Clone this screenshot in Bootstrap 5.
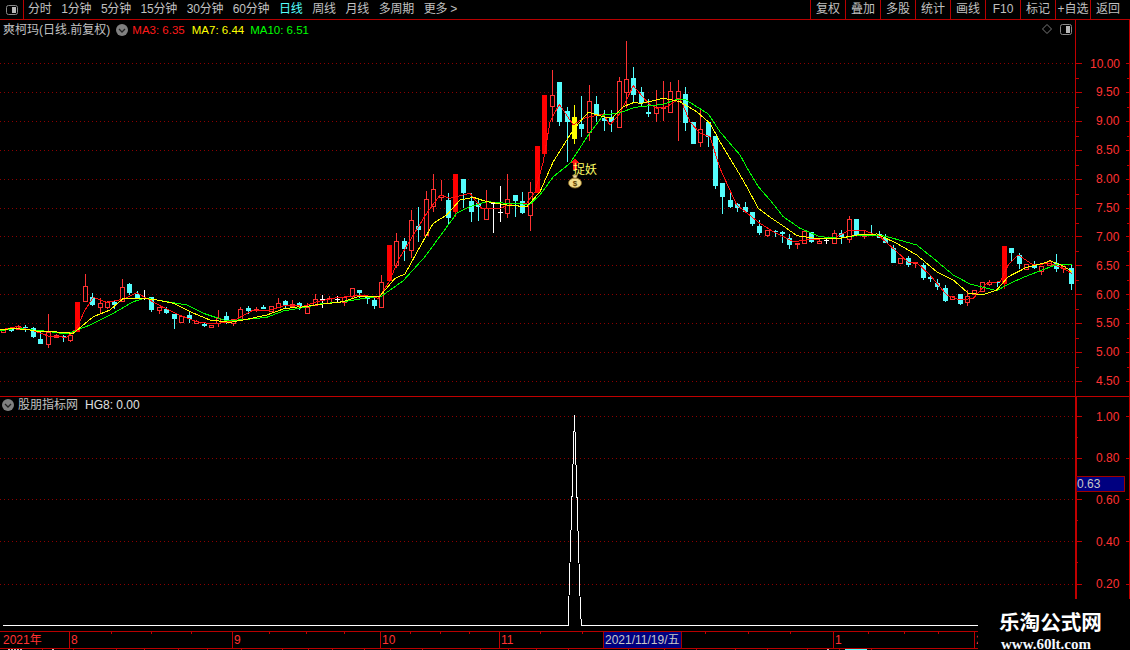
<!DOCTYPE html>
<html lang="zh-CN">
<head>
<meta charset="utf-8">
<title>爽柯玛</title>
<link href="https://cdn.jsdelivr.net/npm/bootstrap@5.3.0/dist/css/bootstrap.min.css" rel="stylesheet">
<style>
html,body{background:#000;margin:0;}
.term{position:relative;width:1130px;height:650px;overflow:hidden;background:#000;color:#c0c0c0;font:12px/1 "Liberation Sans","Noto Sans CJK SC",sans-serif;}
.tbar{height:20px;border-bottom:1px solid #b80000;flex:none;}
.tbar-left{width:24px;height:19px;border-right:1px solid #b80000;}
.tool{padding:0;color:#c0c0c0;font-size:12px;line-height:19px;white-space:nowrap;letter-spacing:-.2px;}
.tool:hover,.tool:focus{color:#c0c0c0;}
.tool.on{color:#55ffff;}
.tgroup{gap:9.6px;padding-left:4px;}
.rtool{width:35px;height:19px;border-left:1px solid #b80000;text-align:center;padding:0;color:#c0c0c0;font-size:12px;line-height:19px;white-space:nowrap;}
.rtool:hover,.rtool:focus{color:#c0c0c0;}
.rgap{width:5px;display:block;}
.pane-a{position:relative;height:377px;flex:none;border-bottom:1px solid #c00000;}
.pane-b{position:relative;height:234px;flex:none;}
.chart{display:block;position:absolute;left:0;top:0;}
.legend{position:absolute;left:3px;top:2px;height:16px;line-height:16px;font-size:12px;white-space:nowrap;}
.legend-b{left:2px;top:0;}
.orb{width:12px;height:12px;flex:none;}
.orb-gap{margin-left:6px;}
.ma{font-size:11.5px;}
.ma-r{color:#ff1a1a;margin-left:4px;}
.ma-y{color:#ffff00;margin-left:7px;}
.ma-g{color:#00ff00;margin-left:6px;}
.ind-name{margin-left:4px;}
.ind-val{margin-left:7px;color:#e0e0e0;}
.tline{position:relative;height:18px;width:978px;flex:none;border-top:1px solid #b80000;border-bottom:1px solid #b80000;}
.sliver{height:1px;flex:none;}
.brand{position:absolute;left:980px;top:600px;width:150px;height:50px;background:#000;color:#fff;}
.brand-cn{margin:11px 0 0 19px;font:700 20.6px/20px "Noto Sans CJK SC",sans-serif;white-space:nowrap;}
.brand-en{margin:7px 0 0 21px;font:700 15px/12px "Liberation Serif",serif;white-space:nowrap;color:#f4f8ff;}
svg text{font-family:"Liberation Sans","Noto Sans CJK SC",sans-serif;}
</style>
</head>
<body>
<div class="term d-flex flex-column">
  <nav class="tbar d-flex justify-content-between">
    <div class="d-flex">
      <div class="tbar-left d-flex align-items-center justify-content-center">
        <svg width="12" height="10" viewBox="0 0 12 10"><rect x=".5" y=".5" width="11" height="9" rx="2" fill="none" stroke="#8a8a8a"/><rect x="6" y="2" width="4" height="6" fill="#b8b8b8"/></svg>
      </div>
      <div class="nav tgroup flex-nowrap">
        <a class="nav-link tool" href="#">分时</a>
        <a class="nav-link tool" href="#">1分钟</a>
        <a class="nav-link tool" href="#">5分钟</a>
        <a class="nav-link tool" href="#">15分钟</a>
        <a class="nav-link tool" href="#">30分钟</a>
        <a class="nav-link tool" href="#">60分钟</a>
        <a class="nav-link tool on" href="#">日线</a>
        <a class="nav-link tool" href="#">周线</a>
        <a class="nav-link tool" href="#">月线</a>
        <a class="nav-link tool" href="#">多周期</a>
        <a class="nav-link tool" href="#">更多 &gt;</a>
      </div>
    </div>
    <div class="nav flex-nowrap">
      <a class="nav-link rtool" href="#">复权</a>
      <a class="nav-link rtool" href="#">叠加</a>
      <a class="nav-link rtool" href="#">多股</a>
      <a class="nav-link rtool" href="#">统计</a>
      <a class="nav-link rtool" href="#">画线</a>
      <a class="nav-link rtool" href="#">F10</a>
      <a class="nav-link rtool" href="#">标记</a>
      <a class="nav-link rtool" href="#">+自选</a>
      <a class="nav-link rtool" href="#">返回</a>
      <span class="rgap"></span>
    </div>
  </nav>

  <section class="pane-a">
    <svg id="mainChart" class="chart" width="1130" height="377" viewBox="0 20 1130 377" shape-rendering="crispEdges">
      <g id="gridA"></g>
      <g id="candles"></g>
      <g id="mas" fill="none" stroke-width="1"></g>
      <g fill="#ff3232" font-size="12">
        <text x="1090" y="68">10.00</text><text x="1096" y="96">9.50</text><text x="1096" y="125">9.00</text>
        <text x="1096" y="154">8.50</text><text x="1096" y="183">8.00</text><text x="1096" y="212">7.50</text>
        <text x="1096" y="241">7.00</text><text x="1096" y="270">6.50</text><text x="1096" y="299">6.00</text>
        <text x="1096" y="327">5.50</text><text x="1096" y="356">5.00</text><text x="1096" y="385">4.50</text>
      </g>
      <g>
        <path d="M575 158 L579 163 L577 163 L577 170 L573 170 L573 163 L571 163 Z" fill="#ff1010"/>
        <text x="573" y="174" font-size="12" fill="#ffff66">捉妖</text>
        <g shape-rendering="auto">
          <ellipse cx="575" cy="183" rx="6.5" ry="5" fill="#f2dc8c" stroke="#8a6a20" stroke-width=".8"/>
          <path d="M572.500 175 h5 l-1 3 h-3z" fill="#e8d8a0" stroke="#8a6a20" stroke-width=".6"/>
          <text x="575" y="186" font-size="8" text-anchor="middle" font-weight="700" fill="#604000">$</text>
        </g>
      </g>
      <g shape-rendering="auto" fill="none">
        <path d="M1047 24.500 L1051.500 29 L1047 33.500 L1042.500 29 Z" stroke="#7a7a7a"/>
        <rect x="1060.500" y="24.500" width="11" height="10" rx="2" stroke="#8a8a8a"/>
        <rect x="1066" y="26" width="4" height="7" fill="#b8b8b8"/>
      </g>
    </svg>
    <div class="legend d-flex align-items-center">
      <span>爽柯玛(日线.前复权)</span>
      <svg class="orb orb-gap" viewBox="0 0 12 12"><circle cx="6" cy="6" r="6" fill="#808080"/><path d="M3 5 L6 8 L9 5" fill="none" stroke="#222" stroke-width="1.300"/></svg>
      <span class="ma ma-r">MA3: 6.35</span>
      <span class="ma ma-y">MA7: 6.44</span>
      <span class="ma ma-g">MA10: 6.51</span>
    </div>
  </section>

  <section class="pane-b">
    <svg id="lowChart" class="chart" width="1130" height="234" viewBox="0 398 1130 234" shape-rendering="crispEdges">
      <g id="gridB"></g>
      <polyline points="3,626.5 568.5,626.5 568.5,613 574.5,416 580.5,613 581.5,626.5 978,626.5" fill="none" stroke="#fff" stroke-width="1"/>
      <g fill="#ff3232" font-size="12">
        <text x="1096" y="422">1.00</text><text x="1096" y="463">0.80</text><text x="1096" y="505">0.60</text>
        <text x="1096" y="547">0.40</text><text x="1096" y="589">0.20</text>
      </g>
      <rect x="1076.500" y="477.500" width="48" height="15" fill="#000080" stroke="#a00000"/>
      <text x="1077" y="489" font-size="12" fill="#c8c8c8">0.63</text>
    </svg>
    <div class="legend legend-b d-flex align-items-center">
      <svg class="orb" viewBox="0 0 12 12"><circle cx="6" cy="6" r="6" fill="#808080"/><path d="M3 5 L6 8 L9 5" fill="none" stroke="#222" stroke-width="1.300"/></svg>
      <span class="ind-name">股朋指标网</span>
      <span class="ind-val">HG8: 0.00</span>
    </div>
  </section>

  <div class="tline">
    <svg id="timeAxis" class="chart" width="978" height="16" viewBox="0 632 978 16" shape-rendering="crispEdges">
      <g id="ticks"></g>
      <g fill="#ff3232" font-size="12">
        <text x="3" y="644">2021年</text><text x="71" y="644">8</text><text x="234" y="644">9</text>
        <text x="382" y="644">10</text><text x="501" y="644">11</text><text x="835" y="644">1</text><text x="976" y="644">2</text>
      </g>
      <rect x="603.500" y="631.500" width="78" height="17" fill="#000080" stroke="#a00000"/>
      <text x="605" y="644" font-size="12" fill="#c8c8c8">2021/11/19/五</text>
    </svg>
  </div>
  <div class="sliver">
    <svg id="bottomRow" class="d-block" width="1130" height="1" shape-rendering="crispEdges"></svg>
  </div>

  <aside class="brand">
    <div class="brand-cn">乐淘公式网</div>
    <div class="brand-en">www.60lt.com</div>
  </aside>
</div>

<script src="https://cdn.jsdelivr.net/npm/bootstrap@5.3.0/dist/js/bootstrap.bundle.min.js"></script>
<script>
const R='#ff3232',RS='#ff0000',C='#54fcfc',W='#ffffff',Y='#ffff00',AX='#c00000',DOT='#8c0000';
const el=id=>document.getElementById(id);

/* grids and axes */
let a='';
for(let i=0;i<12;i++){const y=Math.round(63+i*28.9);
  a+=`<line x1="0" x2="1075" y1="${y+.5}" y2="${y+.5}" stroke="${DOT}" stroke-dasharray="1 3"/>`;
  a+=`<line x1="1075" x2="1082" y1="${y+.5}" y2="${y+.5}" stroke="${AX}"/>`;
  a+=`<line x1="1075" x2="1079" y1="${y+15}" y2="${y+15}" stroke="${AX}"/>`;
  a+=`<line x1="1126" x2="1130" y1="${y+.5}" y2="${y+.5}" stroke="${AX}"/>`;
  a+=`<line x1="1127" x2="1130" y1="${y+15}" y2="${y+15}" stroke="${AX}"/>`;
}
a+=`<line x1="1075.5" x2="1075.5" y1="20" y2="397" stroke="${AX}"/><line x1="1129.5" x2="1129.5" y1="20" y2="397" stroke="${AX}"/>`;
el('gridA').innerHTML=a;

let b='';
[417,459,500,542,585].forEach(y=>{
  b+=`<line x1="0" x2="1075" y1="${y+.5}" y2="${y+.5}" stroke="${DOT}" stroke-dasharray="1 3"/>`;
  b+=`<line x1="1075" x2="1082" y1="${y+.5}" y2="${y+.5}" stroke="${AX}"/>`;
  b+=`<line x1="1075" x2="1078" y1="${y+21.5}" y2="${y+21.5}" stroke="${AX}"/>`;
  b+=`<line x1="1126" x2="1130" y1="${y+.5}" y2="${y+.5}" stroke="${AX}"/>`;
});
b+=`<rect x="1075" y="398" width="2" height="202" fill="${AX}"/><line x1="1129.5" x2="1129.5" y1="398" y2="600" stroke="${AX}"/>`;
el('gridB').innerHTML=b;

let t='';
[69,232,380,499,833,974].forEach(x=>t+=`<line x1="${x+.5}" x2="${x+.5}" y1="632" y2="648" stroke="${AX}"/>`);
[111,151,191,269,306,344,410,440,469,540,582,705,748,790,868,904,938].forEach(x=>t+=`<line x1="${x+.5}" x2="${x+.5}" y1="632" y2="634" stroke="${AX}"/>`);
el('ticks').innerHTML=t;

let s='';
[42,73,116,144,178,207,241,282,308,332,364,390,422,480,508,536,568,628,664,696,735,767,807,839,871].forEach(x=>s+=`<rect x="${x}" y="0" width="1" height="1" fill="${AX}"/>`);
[8,11,14,17,20,52,827].forEach(x=>s+=`<rect x="${x}" y="0" width="2" height="1" fill="#c0c0c0"/>`);
s+=`<rect x="845" y="0" width="22" height="1" fill="#55ffff"/>`;
el('bottomRow').innerHTML=s;

/* candles: x, high, body top, body bottom, low, type */
const K=[
[3,329,329,332,332,'r'],[11,328,329,331,332,'c'],[18,325,326,329,330,'r'],[25,325,327,328,332,'c'],
[33,327,328,337,338,'c'],[40,332,339,344,344,'c'],[48,314,332,344,348,'r'],[56,334,335,337,338,'r'],
[63,335,336,337,342,'c'],[70,334,335,340,342,'r'],[77,302,302,332,332,'R'],[85,274,286,301,302,'r'],
[92,293,297,305,306,'c'],[100,298,303,307,314,'r'],[107,301,302,307,309,'r'],[114,301,302,305,309,'c'],
[122,279,287,301,302,'r'],[129,283,284,293,295,'c'],[137,291,294,298,299,'c'],[144,290,298,299,300,'w'],
[151,297,297,310,312,'c'],[159,307,307,310,314,'r'],[166,307,309,313,314,'c'],[174,314,314,319,329,'c'],
[181,316,316,322,322,'r'],[189,312,315,319,323,'c'],[196,320,321,323,323,'r'],[204,323,324,326,327,'c'],
[211,325,325,327,328,'r'],[218,310,318,323,327,'r'],[226,312,316,321,324,'c'],[233,319,319,323,326,'r'],
[240,307,309,319,320,'r'],[248,306,308,311,314,'c'],[256,307,309,310,312,'r'],[263,305,307,309,309,'c'],
[271,306,306,311,311,'r'],[278,298,303,307,307,'r'],[285,300,301,306,308,'c'],[292,300,304,306,307,'r'],
[299,302,303,307,310,'c'],
[307,303,307,313,313,'r'],[315,294,299,305,305,'r'],[322,295,299,300,308,'w'],[329,296,298,303,303,'r'],
[337,296,299,300,302,'w'],[344,297,297,302,306,'r'],[352,288,288,296,298,'r'],[359,290,290,293,298,'c'],
[367,296,296,299,304,'c'],[374,297,300,306,309,'c'],[381,275,282,307,307,'r'],[389,245,245,281,281,'R'],
[396,233,241,265,268,'r'],[404,238,241,249,261,'c'],[411,210,220,250,258,'r'],[418,207,226,230,242,'c'],
[426,191,199,235,235,'r'],[433,174,189,206,212,'r'],[441,180,195,197,201,'r'],[448,193,200,218,224,'c'],
[455,174,174,212,217,'R'],[463,179,179,193,208,'c'],[471,193,201,212,222,'c'],[478,200,203,207,221,'c'],
[486,190,208,219,219,'r'],[493,203,203,204,233,'w'],[500,186,212,213,222,'w'],[507,174,199,213,218,'r'],
[515,195,195,201,217,'c'],[522,192,201,213,214,'c'],[530,182,192,215,231,'r'],[537,146,146,193,193,'R'],
[544,95,95,154,154,'R'],[552,70,95,106,122,'r'],[559,82,82,122,126,'c'],[567,107,111,122,162,'c'],
[574,105,117,139,144,'y'],[581,96,124,129,137,'c'],[589,85,101,132,141,'r'],[596,96,104,116,122,'c'],
[604,110,118,121,131,'c'],[611,110,117,122,132,'c'],[619,77,81,127,127,'r'],[626,41,79,92,108,'r'],
[633,67,78,95,103,'c'],[641,87,92,103,107,'c'],[648,99,112,114,117,'c'],[656,90,107,113,122,'r'],
[663,81,107,108,121,'r'],[670,82,91,112,113,'r'],[678,80,91,98,141,'r'],[685,87,94,123,131,'c'],
[693,122,122,144,144,'c'],[700,109,129,142,147,'r'],[708,122,122,137,147,'c'],[715,136,136,186,189,'c'],
[722,183,183,197,214,'c'],[730,193,200,207,208,'c'],[737,203,204,208,212,'c'],[745,202,207,212,213,'c'],
[752,212,212,224,226,'c'],[759,220,226,233,235,'c'],[767,230,230,235,237,'r'],[775,230,231,232,237,'c'],
[782,231,232,234,243,'c'],[789,234,238,245,249,'c'],[797,243,243,244,249,'r'],[804,231,231,243,244,'r'],
[811,232,232,242,243,'c'],[819,238,241,243,243,'r'],[826,237,240,241,244,'w'],[834,230,233,243,243,'r'],
[841,230,233,237,244,'c'],[849,216,219,239,243,'r'],[856,219,219,236,236,'c'],[864,230,234,236,239,'r'],
[871,225,234,236,236,'c'],[879,231,234,238,238,'c'],
[885,234,238,243,243,'c'],[893,245,248,263,263,'c'],[900,258,258,263,263,'r'],[908,256,258,265,267,'c'],
[915,262,262,263,268,'r'],[923,263,265,278,280,'c'],[930,275,277,279,282,'c'],[937,279,283,287,290,'c'],
[945,285,288,301,302,'c'],[952,296,296,299,299,'r'],[960,294,294,304,305,'c'],[967,290,296,302,306,'r'],
[974,290,290,294,294,'r'],[982,282,282,291,291,'r'],[989,280,282,284,286,'r'],[997,282,282,283,287,'c'],
[1004,246,246,284,289,'R'],[1011,248,248,253,262,'c'],[1019,253,255,264,269,'c'],[1026,264,264,269,269,'r'],
[1034,261,265,268,269,'c'],[1041,266,266,271,275,'r'],[1049,261,261,265,265,'r'],[1056,254,263,269,272,'c'],
[1063,266,266,268,273,'r'],[1071,264,268,284,290,'c']];
let h='';
const COL={r:R,R:RS,c:C,w:W,y:Y};
K.forEach(([x,hi,top,bot,lo,tp])=>{
  const c=COL[tp];
  if(hi<top)h+=`<rect x="${x}" y="${hi}" width="1" height="${top-hi}" fill="${c}"/>`;
  if(lo>bot)h+=`<rect x="${x}" y="${bot}" width="1" height="${lo-bot}" fill="${c}"/>`;
  if(tp==='r')h+=`<rect x="${x-2+.5}" y="${top+.5}" width="4" height="${Math.max(bot-top,1)}" fill="#000" stroke="${c}"/>`;
  else if(tp==='w')h+=`<rect x="${x-2}" y="${top}" width="5" height="1" fill="${c}"/>`;
  else h+=`<rect x="${x-2}" y="${top}" width="5" height="${Math.max(bot-top,1)}" fill="${c}"/>`;
});
el('candles').innerHTML=h;

/* moving averages, traced piecewise: [offsetX, offsetY, fromX, toX, points at 3x] */
const piece=(ox,oy,x0,x1,arr)=>{const o=[];for(let i=0;i<arr.length;i+=2){const x=ox+arr[i]/3;if(x>=x0&&x<=x1)o.push([x,oy+arr[i+1]/3]);}return o;};
const mk=ps=>[].concat(...ps).map(p=>p[0].toFixed(1)+','+p[1].toFixed(1)).join(' ');
const green=mk([
 piece(0,260,0,299,[0,212,50,205,100,210,140,214,200,222,232,210,270,195,340,160,400,125,436,114,500,125,560,135,610,160,680,183,740,178,800,172,850,153,896,145]),
 piece(300,160,300,539,[0,445,60,432,130,425,180,417,245,408,310,362,375,290,430,215,470,160,510,140,560,125,620,130,690,133,720,110]),
 piece(520,35,540,745,[60,480,100,425,150,385,205,300,250,240,300,233,345,217,430,208,470,193,495,193,565,237,600,290,660,360]),
 piece(700,120,746,885,[145,150,175,200,210,240,250,290,300,325,360,350,420,355,480,345,540,345]),
 piece(880,200,885,1080,[50,118,110,135,160,175,220,225,270,252,350,272,390,250,440,228,500,205,530,193,575,193])]);
const yellow=mk([
 piece(0,260,0,299,[0,210,40,205,90,210,120,215,170,216,220,220,250,195,280,170,330,150,370,115,430,115,470,120,520,130,570,155,630,180,690,187,740,178,800,165,850,147,896,140]),
 piece(300,160,300,539,[0,442,60,433,130,425,180,408,240,408,285,355,315,342,360,260,400,190,440,165,480,120,520,112,560,125,620,135,680,140,720,90]),
 piece(520,35,540,745,[60,470,100,380,150,300,180,260,205,232,250,245,275,250,310,215,340,203,365,205,430,190,480,200,530,230,570,265,600,320,660,420]),
 piece(700,120,746,885,[140,200,175,265,215,295,260,325,290,347,360,357,420,355,470,345,530,342]),
 piece(880,200,885,1080,[50,130,110,165,170,215,220,240,265,280,310,284,350,270,385,230,440,202,490,190,510,182,550,198,575,215])]);
const red=mk([
 piece(0,260,0,299,[0,210,50,200,100,212,145,228,200,232,230,205,255,150,280,112,320,127,370,118,410,98,440,115,480,137,530,162,590,185,640,192,700,183,760,150,810,150,860,135,896,135]),
 piece(300,160,300,539,[0,442,50,425,110,413,190,405,235,415,268,365,295,300,340,225,380,160,420,105,450,115,510,100,545,145,600,145,640,130,680,130,705,95]),
 piece(520,35,540,745,[70,380,90,260,118,208,160,270,190,250,250,237,270,270,300,235,340,152,385,205,410,220,440,215,480,190,510,260,540,295,570,305,600,400,650,510]),
 piece(700,120,746,885,[130,265,180,310,220,335,280,365,340,358,400,355,445,333,490,330,540,350]),
 piece(880,200,885,1080,[50,155,85,187,110,188,150,225,200,285,240,300,280,295,320,250,360,245,385,195,415,165,460,195,510,190,550,205,575,220])]);
el('mas').innerHTML=`<polyline points="${red}" stroke="#ff1010"/><polyline points="${green}" stroke="#00ff00"/><polyline points="${yellow}" stroke="#ffff00"/>`;
</script>
</body>
</html>
